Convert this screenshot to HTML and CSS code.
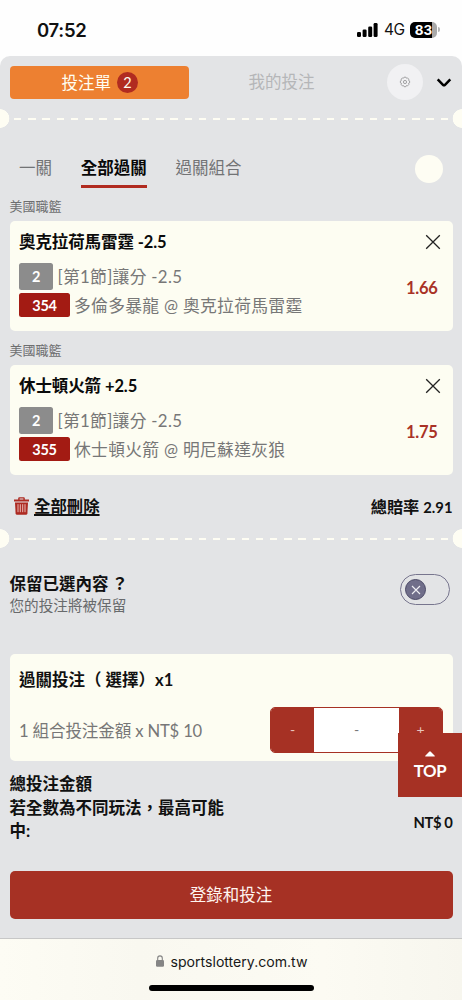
FILE: index.html
```html
<!DOCTYPE html>
<html lang="zh-Hant">
<head>
<meta charset="utf-8">
<meta name="viewport" content="width=device-width">
<title>投注單</title>
<link rel="stylesheet" href="styles.css">
</head>
<body>
<div class="phone">
  <header class="status">
    <span class="time">07:52</span>
    <div class="status-right">
      <svg class="signal" width="21" height="14" viewBox="0 0 21 14"><rect x="0" y="9" width="4" height="5" rx="1.3"/><rect x="5.6" y="6.5" width="4" height="7.5" rx="1.3"/><rect x="11.2" y="3.4" width="4" height="10.6" rx="1.3"/><rect x="16.6" y="0" width="4" height="14" rx="1.3"/></svg>
      <span class="network">4G</span>
      <span class="battery">83</span>
      <span class="battery-tip"></span>
    </div>
  </header>
  <main class="panel">
    <div class="topbar">
      <div class="slip-tab">投注單<span class="count">2</span></div>
      <div class="my-bets">我的投注</div>
      <div class="gear">
        <svg width="12" height="12" viewBox="0 0 12 12" fill="none" stroke="#98989a" stroke-width=".9"><path d="M5.1 1.2h1.8l.5 1 1.1-.3 1.3 1.3-.3 1.1 1.1.6v2l-1.1.5.3 1.2-1.3 1.3-1.1-.3-.5 1.1H5.1l-.6-1.1-1.1.3-1.2-1.3.3-1.2-1.1-.5v-2l1.1-.6-.3-1.1 1.2-1.3 1.1.3z" stroke-linejoin="round"/><circle cx="6" cy="6" r="1.6"/></svg>
      </div>
      <svg class="chevron" width="16" height="10" viewBox="0 0 16 10" fill="none" stroke="#000" stroke-width="2.5"><path d="M1.7 1.4 7 6.8q1 1 2 0l5.3-5.4"/></svg>
    </div>
    <div class="divider"></div>
    <nav class="tabs">
      <span class="tab">一關</span>
      <span class="tab active">全部過關</span>
      <span class="tab">過關組合</span>
      <span class="dot"></span>
    </nav>
    <section class="league">
      <h3 class="league-name">美國職籃</h3>
      <article class="card">
        <div class="pick">
          <div class="pick-title">奧克拉荷馬雷霆 -2.5</div>
          <div class="market"><span class="chip gray">2</span><span class="market-text">[第1節]讓分 -2.5</span></div>
          <div class="match"><span class="chip red">354</span>多倫多暴龍 @ 奧克拉荷馬雷霆</div>
        </div>
        <div class="pick-side">
          <svg class="close" width="16" height="16" viewBox="0 0 16 16" stroke="#222" stroke-width="1.3"><path d="m1.2 1.2 13.6 13.6M14.8 1.2 1.2 14.8"/></svg>
          <span class="odds">1.66</span>
        </div>
      </article>
    </section>
    <section class="league">
      <h3 class="league-name">美國職籃</h3>
      <article class="card">
        <div class="pick">
          <div class="pick-title">休士頓火箭 +2.5</div>
          <div class="market"><span class="chip gray">2</span><span class="market-text">[第1節]讓分 -2.5</span></div>
          <div class="match"><span class="chip red">355</span>休士頓火箭 @ 明尼蘇達灰狼</div>
        </div>
        <div class="pick-side">
          <svg class="close" width="16" height="16" viewBox="0 0 16 16" stroke="#222" stroke-width="1.3"><path d="m1.2 1.2 13.6 13.6M14.8 1.2 1.2 14.8"/></svg>
          <span class="odds">1.75</span>
        </div>
      </article>
    </section>
    <div class="summary">
      <svg class="trash" width="15" height="18" viewBox="0 0 15 18"><path d="M0 2.4h4.2V1.3Q4.2.2 5.3.2h4.4q1.1 0 1.1 1.1v1.1H15v2.2H0zM5.6 2.4h3.8V1.5H5.6z" fill="#ad2a22" fill-rule="evenodd"/><path d="M1 5.4h13l-.6 11q-.1 1.4-1.5 1.4H3.1q-1.4 0-1.5-1.4z" fill="#ad2a22"/><path d="M4 7.2v8M6.3 7.2v8M8.7 7.2v8M11 7.2v8" stroke="#efc9c6" stroke-width=".9"/></svg>
      <span class="delete">全部刪除</span>
      <span class="total-odds">總賠率 <span class="number">2.91</span></span>
    </div>
    <div class="divider"></div>
    <div class="keep">
      <div>
        <div class="keep-title">保留已選內容<span class="question">？</span></div>
        <div class="keep-note">您的投注將被保留</div>
      </div>
      <div class="toggle"><span class="knob"><svg width="10" height="10" viewBox="0 0 10 10" stroke="#f0f0f4" stroke-width="1.1"><path d="m1 1 8 8M9 1 1 9"/></svg></span></div>
    </div>
    <section class="stake">
      <div class="stake-title"><span>過關投注</span><span class="choice">（ 選擇）</span><span>x1</span></div>
      <div class="stake-row">
        <span class="stake-text">1 組合投注金額 x NT$ 10</span>
        <div class="stepper"><span class="step">-</span><span class="amount">-</span><span class="step">+</span></div>
      </div>
    </section>
    <div class="totals">
      <div class="totals-text">總投注金額<br>若全數為不同玩法，最高可能<br>中:</div>
      <div class="totals-value">NT$ 0</div>
    </div>
    <div class="submit">登錄和投注</div>
    <div class="to-top">
      <svg width="10" height="6" viewBox="0 0 10 6"><path d="M.3 5.6Q0 5.2.5 4.6L4.2.7Q5 0 5.8.7l3.7 3.9q.5.6.2 1z" fill="#fff"/></svg>
      <span>TOP</span>
    </div>
  </main>
  <footer class="browser">
    <div class="address">
      <svg width="8" height="12" viewBox="0 0 8 12"><rect x="0" y="5" width="8" height="6.8" rx="1.2" fill="#858585"/><path d="M1.7 5.5V3.2a2.3 2.3 0 0 1 4.6 0v2.3" fill="none" stroke="#858585" stroke-width="1.1"/></svg>
      <span>sportslottery.com.tw</span>
    </div>
    <div class="home"></div>
  </footer>
</div>
</body>
</html>
```
FILE: styles.css
```css
* { box-sizing: border-box; }
body {
  margin: 0;
  background: #fff;
  font-family: Lato, "Noto Sans CJK TC", sans-serif;
  color: #111;
}
.phone { width: 462px; height: 1000px; overflow: hidden; background: #fefefe; }
.status {
  height: 56px;
  padding: 3px 25px 0 37px;
  display: flex;
  align-items: center;
  justify-content: space-between;
  font-family: Inter, sans-serif;
}
.time { font-size: 18.5px; font-weight: 600; letter-spacing: -0.3px; }
.status-right { display: flex; align-items: center; }
.network { font-size: 15.5px; margin-left: 6px; width: 20px; letter-spacing: -0.5px; }
.battery {
  width: 27px;
  height: 16px;
  margin-left: 6px;
  border-radius: 5px;
  background: linear-gradient(to right, #000 82%, #a9a9a9 82%);
  color: #fff;
  font-size: 13.5px;
  font-weight: 700;
  line-height: 16px;
  text-align: center;
}
.battery-tip { width: 2px; height: 5px; margin-left: 1px; background: #b5b5b5; border-radius: 0 2px 2px 0; margin-right: -3px; }
.panel {
  position: relative;
  height: 882px;
  background: #e3e4e6;
  border-radius: 10px 10px 0 0;
}
.topbar { height: 52.5px; padding: 9.5px 10px 0 9.5px; display: flex; }
.slip-tab {
  width: 179.5px;
  height: 33px;
  border-radius: 4px;
  background: #ed8031;
  color: #fffef2;
  font-size: 16.5px;
  display: flex;
  align-items: center;
  justify-content: center;
  gap: 6px;
  padding-left: 1px;
}
.count {
  width: 21px;
  height: 21px;
  border-radius: 50%;
  background: #b12b20;
  font-size: 14.5px;
  line-height: 21px;
  text-align: center;
}
.my-bets { width: 184px; padding-left: 1px; line-height: 33px; text-align: center; font-size: 16.5px; font-weight: 400; color: #b5b6b8; }
.gear {
  width: 36px;
  height: 36px;
  margin: -2px 0 0 14px;
  border-radius: 50%;
  background: #f1f1f3;
  display: flex;
  align-items: center;
  justify-content: center;
}
.chevron { margin: 12.5px 0 0 13px; }
.divider {
  height: 19px;
  background:
    radial-gradient(circle at 0 50%, #fefdf3 9px, transparent 9.6px),
    radial-gradient(circle at 100% 50%, #fefdf3 9px, transparent 9.6px),
    repeating-linear-gradient(to right, #fefdf3 0 7.4px, transparent 7.4px 14.22px) 14px 9px / 434px 2px no-repeat;
}
.tabs { height: 68px; padding: 20px 19px 0; display: flex; align-items: flex-start; }
.tab { height: 40px; line-height: 40px; font-size: 16.5px; color: #727375; margin-right: 28.7px; }
.tab.active { font-weight: 700; color: #080808; border-bottom: 3px solid #b12b20; }
.dot { width: 28px; height: 28px; margin: 7px 0 0 auto; border-radius: 50%; background: #fefdf3; }
.league { height: 144px; padding: 0 9.5px; }
.league-name { margin: 0; height: 25px; line-height: 21.5px; font-size: 13px; font-weight: 400; color: #6d6e70; }
.card {
  height: 110.5px;
  padding: 10px 12px 0 9.5px;
  border-radius: 5px;
  background: #fdfdf2;
  display: flex;
  justify-content: space-between;
}
.pick-title { height: 32px; line-height: 22px; font-size: 16.5px; font-weight: 700; color: #0b0b0b; letter-spacing: -0.1px; }
.market { display: flex; align-items: center; gap: 4.5px; height: 27px; margin-bottom: 3.5px; font-size: 16.8px; color: #777; }
.market-text { letter-spacing: .3px; }
.match { display: flex; align-items: center; gap: 4px; height: 24px; font-size: 16.8px; letter-spacing: .3px; color: #777; white-space: nowrap; }
.chip { border-radius: 2.5px; color: #fff; font-size: 14.5px; font-weight: 700; letter-spacing: -0.2px; text-align: center; }
.gray { width: 34px; height: 27px; line-height: 27px; background: #8c8c8c; }
.red { width: 51px; height: 24px; line-height: 25px; background: #a31b13; }
.pick-side { display: flex; flex-direction: column; align-items: flex-end; padding-top: 3px; }
.odds { margin: 28px 3px 0 0; line-height: 20px; font-size: 16.5px; font-weight: 700; letter-spacing: -0.3px; color: #a93226; }
.summary { height: 45.5px; padding: 0 9.5px 2px 14px; display: flex; align-items: center; }
.trash { margin-top: 1px; }
.delete { margin: 2px 0 0 5px; font-size: 16.4px; line-height: 24px; font-weight: 700; text-decoration: underline; text-decoration-thickness: 1.5px; text-underline-offset: 2px; }
.total-odds { margin: 1px 0 0 auto; font-size: 16.2px; font-weight: 700; }
.number { font-size: 14.8px; }
.keep { height: 106px; padding: 24.5px 12px 0 9.5px; display: flex; justify-content: space-between; }
.keep-title { line-height: 22px; font-size: 16.5px; font-weight: 700; }
.question { margin-left: 3px; }
.keep-note { line-height: 22px; font-size: 14.6px; color: #686a6c; }
.toggle { width: 50px; height: 31px; margin-top: 1.5px; padding: 4px; border: 1px solid #77758e; border-radius: 16px; }
.knob { width: 21px; height: 21px; border: 1px solid #4b4966; border-radius: 50%; background: #706e8a; display: flex; align-items: center; justify-content: center; }
.stake { height: 107px; margin: 0 9.5px; padding: 15px 9.5px 0; border-radius: 5px; background: #fdfdf2; }
.stake-title { height: 37.5px; line-height: 22px; font-size: 16.5px; font-weight: 700; }
.stake-row { display: flex; align-items: center; justify-content: space-between; }
.stake-text { font-size: 16.6px; letter-spacing: -0.16px; color: #777; }
.stepper { width: 173px; height: 46px; border: 1px solid #a63124; border-radius: 5px; overflow: hidden; display: flex; line-height: 44px; text-align: center; font-size: 14px; }
.step { width: 43px; background: #a63124; color: #e8c5be; }
.amount { flex: 1; background: #fff; color: #777; }
.totals { height: 110px; padding: 12px 9.5px 0; display: flex; justify-content: space-between; font-weight: 700; }
.totals-text { line-height: 23.7px; font-size: 16.5px; }
.totals-value { padding-top: 38.5px; line-height: 20px; font-size: 14.8px; letter-spacing: -0.4px; }
.submit { height: 48px; margin: 0 9.5px; border-radius: 5px; background: #a63124; color: #fff5f0; font-size: 16.5px; line-height: 48px; text-align: center; }
.to-top {
  position: absolute;
  right: 0;
  top: 676.5px;
  width: 64px;
  height: 64px;
  padding-top: 18px;
  background: #a63124;
  color: #fff;
  display: flex;
  flex-direction: column;
  align-items: center;
  gap: 4px;
  font-size: 16.8px;
  font-weight: 700;
  letter-spacing: -0.4px;
  line-height: 20px;
}
.browser { height: 62px; padding-top: 11px; border-top: 1px solid #c7c7c7; background: linear-gradient(to right, #fdfcf4, #f9f8f0 30%, #fcfbf3 70%, #f7f6ee); }
.address { display: flex; align-items: center; justify-content: center; gap: 7px; height: 22px; padding-left: 1px; font-family: Inter, sans-serif; font-size: 14.1px; color: #181818; }
.home { width: 165px; height: 6px; margin: 12.5px auto 0; border-radius: 3px; background: #000; }
```
